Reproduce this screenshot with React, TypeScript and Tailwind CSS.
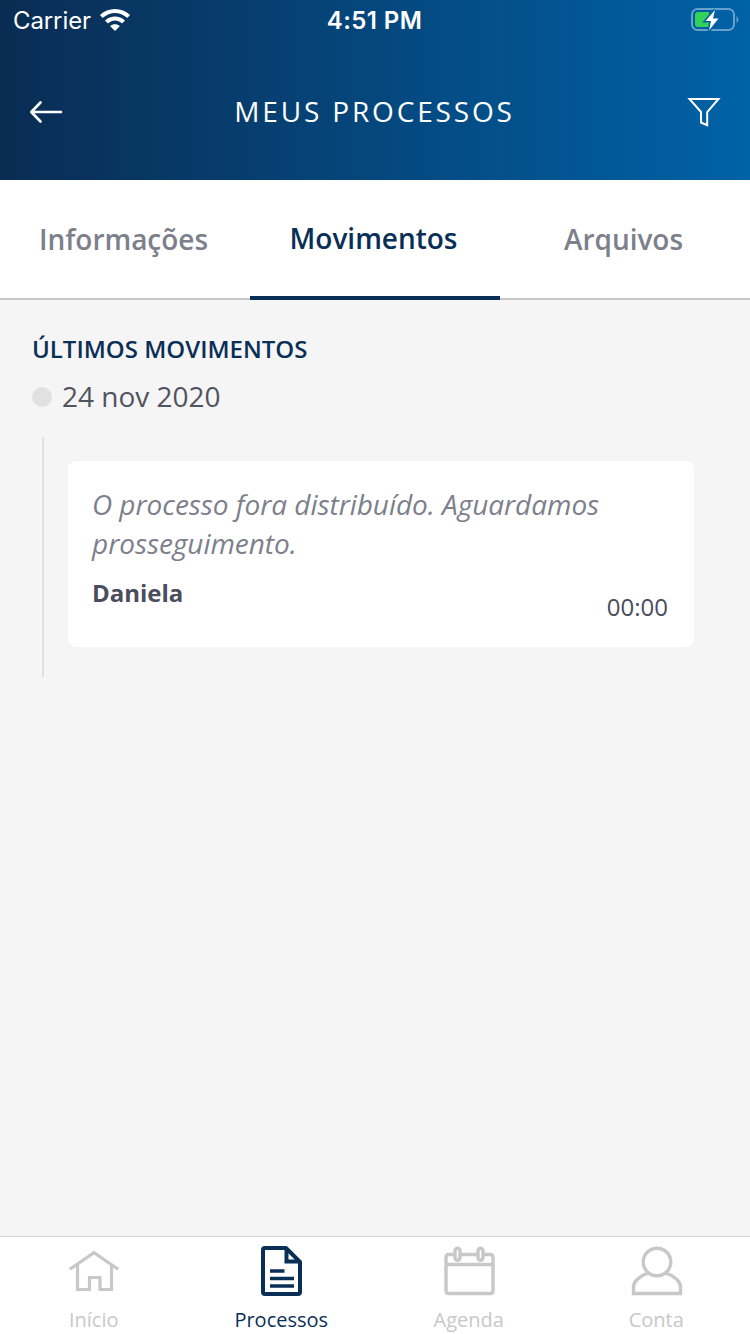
import React from 'react';

const tabs = [
  { label: 'Informações', active: false },
  { label: 'Movimentos', active: true },
  { label: 'Arquivos', active: false },
];

const navItems = [
  { label: 'Início', icon: <HomeIcon />, active: false },
  { label: 'Processos', icon: <DocumentIcon />, active: true },
  { label: 'Agenda', icon: <CalendarIcon />, active: false },
  { label: 'Conta', icon: <UserIcon />, active: false },
];

export default function App() {
  return (
    <div className="flex h-[1334px] w-[750px] flex-col overflow-hidden bg-[#f5f5f5] font-['Open_Sans',sans-serif]">
      <header className="h-[180px] shrink-0 bg-linear-to-r/srgb from-[#0a2c53] to-[#0062a7] text-white">
        <StatusBar />
        <div className="flex h-36 items-center justify-between pr-[29px] pl-7">
          <BackIcon />
          <h1 className="pr-0.5 pb-0.5 text-[28px] leading-10 tracking-[2.85px]">MEUS PROCESSOS</h1>
          <FilterIcon />
        </div>
      </header>

      <nav className="grid h-[120px] shrink-0 grid-cols-3 bg-white">
        {tabs.map((tab) => (
          <button
            key={tab.label}
            className={`flex items-center justify-center pr-[3px] pb-px text-[28px] font-semibold tracking-[-0.03px] ${
              tab.active
                ? 'border-b-4 border-[#0a2f57] text-[#0a2f57]'
                : 'border-b-2 border-[#c8c8c8] text-[#7d7f8b]'
            }`}
          >
            {tab.label}
          </button>
        ))}
      </nav>

      <main className="flex-1 px-8 pt-8">
        <h2 className="text-2xl leading-[34px] font-semibold text-[#0a2f57]">ÚLTIMOS MOVIMENTOS</h2>
        <div className="mt-3 flex h-[38px] items-center gap-[10px]">
          <span className="h-5 w-5 rounded-full bg-[#e1e1e1]" />
          <span className="pb-0.5 text-[28px] text-[#51545f]">24 nov 2020</span>
        </div>

        <div className="mt-[21px] ml-[10px] h-60 border-l-2 border-[#e0e0e0] pt-6 pl-6">
          <article className="flex h-[186px] w-[626px] flex-col rounded-lg bg-white px-6 pt-6">
            <p className="text-[28px] leading-[39px] tracking-[-0.04px] text-[#7d7f8b] italic">
              O processo fora distribuído. Aguardamos prosseguimento.
            </p>
            <div className="mt-[13px] flex justify-between pr-0.5 text-2xl leading-[34px] text-[#4a4d5c]">
              <strong className="font-bold">Daniela</strong>
              <time className="mt-[14px]">00:00</time>
            </div>
          </article>
        </div>
      </main>

      <footer className="grid h-[98px] shrink-0 grid-cols-4 border-t border-[#d5d5d5] bg-white">
        {navItems.map((item) => (
          <button
            key={item.label}
            className={`flex flex-col items-center pt-[7px] text-xl leading-7 ${
              item.active ? 'text-[#0a2f57]' : 'text-[#c8c8c8]'
            }`}
          >
            {item.icon}
            <span className="mt-2">{item.label}</span>
          </button>
        ))}
      </footer>
    </div>
  );
}

function StatusBar() {
  return (
    <div className="grid h-10 grid-cols-3 items-center pr-[11px] pl-[13px] font-['Inter',sans-serif] text-2xl">
      <div className="flex items-center gap-[9px]">
        <span className="pt-0.5 tracking-[-0.1px]">Carrier</span>
        <svg width="30" height="22" viewBox="0 0 30 22" fill="currentColor">
          <path d="M15 0C9.4 0 4.1 2.1 0.3 5.8Q-.1 6.2 .3 6.6L2.3 8.6Q2.8 9 3.3 8.6C6.5 5.6 10.6 3.9 15 3.9S23.5 5.6 26.7 8.6Q27.2 9 27.7 8.6L29.7 6.6Q30.1 6.2 29.7 5.8C25.9 2.1 20.6 0 15 0Z" />
          <path d="M15 7.6C11.4 7.6 8 8.9 5.4 11.3Q5 11.7 5.4 12.1L7.5 14.1Q8 14.5 8.5 14.1C10.3 12.5 12.5 11.6 15 11.6S19.7 12.5 21.5 14.1Q22 14.5 22.5 14.1L24.6 12.1Q25 11.7 24.6 11.3C22 8.9 18.6 7.6 15 7.6Z" />
          <path d="M15 15.2C13.2 15.2 11.6 15.8 10.5 16.8Q10.1 17.2 10.5 17.6L14.5 21.5Q15 22 15.5 21.5L19.5 17.6Q19.9 17.2 19.5 16.8C18.4 15.8 16.8 15.2 15 15.2Z" />
        </svg>
      </div>
      <span className="pt-0.5 pr-[3px] text-center font-semibold tracking-[0.4px]">4:51 PM</span>
      <div className="flex justify-end">
        <BatteryIcon />
      </div>
    </div>
  );
}

function BatteryIcon() {
  return (
    <svg width="49" height="26" viewBox="0 0 49 26" fill="none">
      <rect x="2" y="2" width="42" height="21" rx="5.5" stroke="#66a1cb" strokeWidth="2" />
      <path d="M46.500 9V16Q48.500 14.500 48.500 12.500T46.500 9Z" fill="#66a1cb" />
      <path d="M8 5H19V20H8Q5 20 5 17V8Q5 5 8 5Z" fill="#33d158" />
      <path
        d="M25 3L15.500 14H21L19 23.500L28.500 11.500H23Z"
        fill="white"
        stroke="#0061a5"
        strokeWidth="3"
        paintOrder="stroke"
      />
    </svg>
  );
}

function BackIcon() {
  return (
    <svg width="36" height="28" viewBox="0 0 36 28" fill="none" stroke="currentColor" strokeWidth="2.6" strokeLinecap="round" strokeLinejoin="round">
      <path d="M33 14H3.5M12.5 4.5L3.3 14L12.5 23.5" />
    </svg>
  );
}

function FilterIcon() {
  return (
    <svg width="34" height="32" viewBox="0 0 34 32" fill="none" stroke="currentColor" strokeWidth="2">
      <path d="M2.5 3H31.5L20.2 16V29.2L14 26.5V16Z" />
    </svg>
  );
}

function HomeIcon() {
  return (
    <svg width="54" height="54" viewBox="0 0 54 54" fill="none" stroke="currentColor" strokeWidth="3.2">
      <path d="M2.8 25.2L27 8.8L51.2 25.2" />
      <path d="M10.5 20.5V45.5H22.5V33.5H33V45.5H44.500V20.5" />
    </svg>
  );
}

function DocumentIcon() {
  return (
    <svg width="54" height="54" viewBox="0 0 54 54" fill="none" stroke="currentColor" strokeWidth="4">
      <path d="M32 4H11Q9 4 9 6V48Q9 50 11 50H44Q46 50 46 48V18Z" strokeLinejoin="round" />
      <path d="M32.5 4V17.5H46" />
      <path d="M16 27H30.5M16 34.5H40M16 42H40" strokeWidth="3.6" />
    </svg>
  );
}

function CalendarIcon() {
  return (
    <svg width="54" height="54" viewBox="0 0 54 54" fill="none" stroke="currentColor" strokeWidth="3.4">
      <path d="M12 10.5H7Q4 10.5 4 13.5V46.5Q4 49.5 7 49.5H48Q51 49.5 51 46.5V13.5Q51 10.5 48 10.5H42M19 10.5H35M4 20.5H51" />
      <rect x="13" y="4.3" width="5" height="12" rx="2.5" />
      <rect x="36" y="4.3" width="5" height="12" rx="2.5" />
    </svg>
  );
}

function UserIcon() {
  return (
    <svg width="54" height="54" viewBox="0 0 54 54" fill="none" stroke="currentColor" strokeWidth="3.4">
      <circle cx="28" cy="18" r="13.8" />
      <path d="M19 29.2C10 32 4.5 38 4.5 43V49.5H51.5V43C51.5 38 46 32 37 29.2" />
    </svg>
  );
}
